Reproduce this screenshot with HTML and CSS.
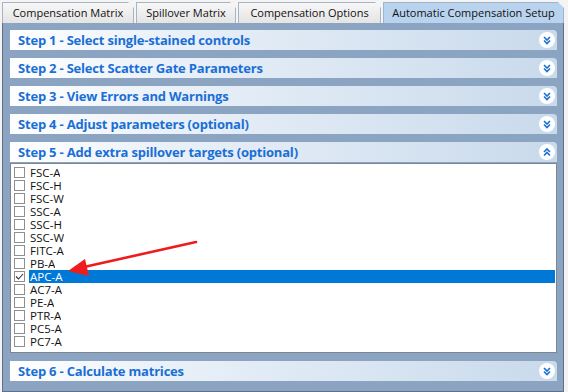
FILE: index.html
```html
<!DOCTYPE html>
<html>
<head>
<meta charset="utf-8">
<link rel="stylesheet" href="styles.css">
</head>
<body>
<div class="window">
  <div class="tabs">
    <div class="tab t1">Compensation Matrix</div>
    <div class="tab t2">Spillover Matrix</div>
    <div class="tab t3">Compensation Options</div>
    <div class="tab active">Automatic Compensation Setup</div>
  </div>
  <div class="panel">
    <div class="step"><span class="title">Step 1 - Select single-stained controls</span><span class="btn"><svg width="16" height="16" viewBox="0 0 16 16"><circle cx="8" cy="8" r="8" fill="#fff"/><path d="M5 5l3 3 3-3M5 8.5l3 3 3-3" fill="none" stroke="#1b70d6" stroke-width="1.6"/></svg></span></div>
    <div class="step"><span class="title">Step 2 - Select Scatter Gate Parameters</span><span class="btn"><svg width="16" height="16" viewBox="0 0 16 16"><circle cx="8" cy="8" r="8" fill="#fff"/><path d="M5 5l3 3 3-3M5 8.5l3 3 3-3" fill="none" stroke="#1b70d6" stroke-width="1.6"/></svg></span></div>
    <div class="step"><span class="title">Step 3 - View Errors and Warnings</span><span class="btn"><svg width="16" height="16" viewBox="0 0 16 16"><circle cx="8" cy="8" r="8" fill="#fff"/><path d="M5 5l3 3 3-3M5 8.5l3 3 3-3" fill="none" stroke="#1b70d6" stroke-width="1.6"/></svg></span></div>
    <div class="step"><span class="title">Step 4 - Adjust parameters (optional)</span><span class="btn"><svg width="16" height="16" viewBox="0 0 16 16"><circle cx="8" cy="8" r="8" fill="#fff"/><path d="M5 5l3 3 3-3M5 8.5l3 3 3-3" fill="none" stroke="#1b70d6" stroke-width="1.6"/></svg></span></div>
    <div class="open">
      <div class="step head5"><span class="title">Step 5 - Add extra spillover targets (optional)</span><span class="btn"><svg width="16" height="16" viewBox="0 0 16 16"><circle cx="8" cy="8" r="8" fill="#fff"/><path d="M5 8l3-3 3 3M5 11.5l3-3 3 3" fill="none" stroke="#1b70d6" stroke-width="1.6"/></svg></span></div>
      <div class="list">
        <div class="row"><span class="cb"></span><span class="lbl">FSC-A</span></div>
        <div class="row"><span class="cb"></span><span class="lbl">FSC-H</span></div>
        <div class="row"><span class="cb"></span><span class="lbl">FSC-W</span></div>
        <div class="row"><span class="cb"></span><span class="lbl">SSC-A</span></div>
        <div class="row"><span class="cb"></span><span class="lbl">SSC-H</span></div>
        <div class="row"><span class="cb"></span><span class="lbl">SSC-W</span></div>
        <div class="row"><span class="cb"></span><span class="lbl">FITC-A</span></div>
        <div class="row"><span class="cb"></span><span class="lbl">PB-A</span></div>
        <div class="row sel"><span class="cb"><svg width="11" height="11" viewBox="0 0 11 11"><path d="M2 5.5l2.5 2.5 4.5-5" fill="none" stroke="#333" stroke-width="1.1"/></svg></span><span class="lbl">APC-A</span></div>
        <div class="row"><span class="cb"></span><span class="lbl">AC7-A</span></div>
        <div class="row"><span class="cb"></span><span class="lbl">PE-A</span></div>
        <div class="row"><span class="cb"></span><span class="lbl">PTR-A</span></div>
        <div class="row"><span class="cb"></span><span class="lbl">PC5-A</span></div>
        <div class="row"><span class="cb"></span><span class="lbl">PC7-A</span></div>
        <svg class="arrow" width="150" height="50" viewBox="0 0 150 50"><line x1="136" y1="3" x2="24" y2="28" stroke="#ee1c1c" stroke-width="2.6" stroke-linecap="round"/><path d="M8 32 L25 20 L29 37 Z" fill="#ee1c1c"/></svg>
      </div>
    </div>
    <div class="step"><span class="title">Step 6 - Calculate matrices</span><span class="btn"><svg width="16" height="16" viewBox="0 0 16 16"><circle cx="8" cy="8" r="8" fill="#fff"/><path d="M5 5l3 3 3-3M5 8.5l3 3 3-3" fill="none" stroke="#1b70d6" stroke-width="1.6"/></svg></span></div>
  </div>
</div>
</body>
</html>
```

FILE: styles.css
```css
* { box-sizing: border-box; }
html, body { margin: 0; padding: 0; }
body {
  width: 568px;
  height: 392px;
  overflow: hidden;
  background: #f3f3f3;
  font-family: "Open Sans", "Noto Sans", sans-serif;
}
.window {
  width: 568px;
  height: 392px;
  display: flex;
  flex-direction: column;
}
.tabs {
  height: 23px;
  display: flex;
  align-items: flex-end;
  padding-left: 2px;
  background: #f4f4f4;
}
.tab {
  height: 21px;
  font-size: 11px;
  line-height: 20px;
  color: #111;
  background: linear-gradient(#f7f7f7, #e4e4e4);
  border: 1px solid #a9b4c2;
  border-bottom: none;
  margin-right: 2px;
  position: relative;
  white-space: nowrap;
  text-align: center;
}
.tab::after {
  content: "";
  position: absolute;
  right: -1px;
  top: -1px;
  border-top: 6px solid #f4f4f4;
  border-left: 6px solid transparent;
}
.t1 { width: 132px; }
.t2 { width: 100px; }
.t3 { width: 143px; }
.tab.active {
  width: 181px;
  background: #b9d3ee;
  border-color: #9fb3ca;
  margin-right: 0;
}
.panel {
  flex: 1;
  margin-left: 2px;
  margin-right: 4px;
  background: #8aa4c2;
  border-left: 1px solid #5f7088;
  border-right: 1px solid #5f7088;
  border-bottom: 1px solid #5f7088;
  padding: 7px 6px 0 7px;
  display: flex;
  flex-direction: column;
  gap: 8px;
}
.step {
  height: 20px;
  display: flex;
  align-items: center;
  justify-content: space-between;
  padding: 0 2px 0 8px;
  background: linear-gradient(90deg, #ffffff 0%, #e9f0f8 30%, #c9daec 100%);
  border-radius: 0 4px 0 0;
}
.title {
  color: #1a6fd6;
  font-weight: bold;
  font-size: 13px;
  letter-spacing: -0.2px;
}
.btn { display: flex; width: 16px; height: 16px; }
.open { display: flex; flex-direction: column; }
.list {
  height: 190px;
  background: #fff;
  border: 1px solid #7d8592;
  margin-top: 1px;
  padding: 2px 1px 0 3px;
  position: relative;
}
.row {
  height: 13px;
  line-height: 13px;
  display: flex;
  align-items: center;
  font-size: 11.5px;
  color: #111;
}
.cb {
  width: 11px;
  height: 11px;
  border: 1px solid #8f8f8f;
  background: #fff;
  margin-right: 4px;
  flex: none;
  display: flex;
}
.cb svg { margin: -1px; }
.lbl { height: 13px; line-height: 13px; padding-left: 1px; overflow: hidden; }
.row.sel .lbl {
  flex: 1;
  background: #0078d7;
  color: #fff;
}
.arrow {
  position: absolute;
  left: 49px;
  top: 75px;
}
```
